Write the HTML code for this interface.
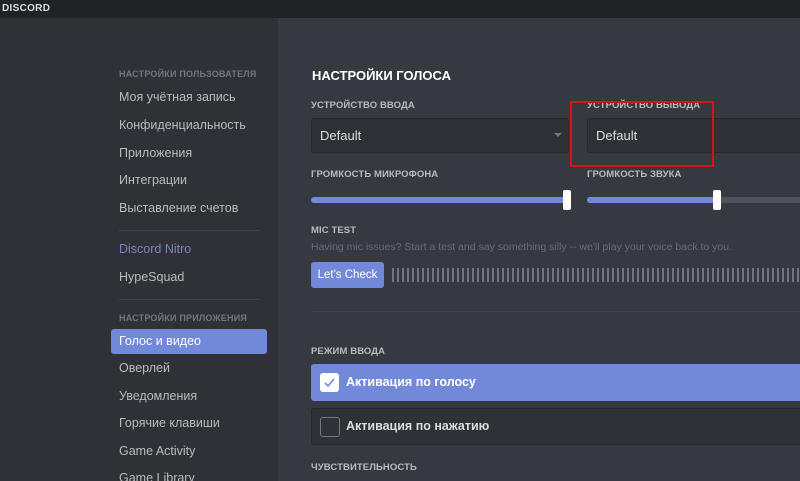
<!DOCTYPE html>
<html><head><meta charset="utf-8"><style>
*{margin:0;padding:0;box-sizing:border-box}
html,body{width:800px;height:481px;overflow:hidden}
body{background:#36393f;font-family:"Liberation Sans","Noto Sans CJK SC",sans-serif;position:relative}
.a{position:absolute;white-space:nowrap}
.tb{left:0;top:0;width:800px;height:18px;background:#202225}
.sb{left:0;top:18px;width:278px;height:463px;background:#2f3136}
.h{font-size:9px;font-weight:bold;color:#72767d;letter-spacing:.2px}
.it{font-size:12.5px;color:#b9bbbe;left:119px}
.l{font-size:9.5px;font-weight:bold;color:#b9bbbe;letter-spacing:.1px}
.sep{height:1px;background:#40434a}
</style></head><body>
<div class="a tb"></div>
<div class="a" style="left:2px;top:3px;font-size:10px;font-weight:bold;color:#dcddde;letter-spacing:.3px">DISCORD</div>
<div class="a sb"></div>
<div class="a h" style="left:119px;top:69px">НАСТРОЙКИ ПОЛЬЗОВАТЕЛЯ</div>
<div class="a it" style="top:90px">Моя учётная запись</div>
<div class="a it" style="top:118px">Конфиденциальность</div>
<div class="a it" style="top:146px">Приложения</div>
<div class="a it" style="top:173px">Интеграции</div>
<div class="a it" style="top:201px">Выставление счетов</div>
<div class="a sep" style="left:119px;top:230px;width:141px"></div>
<div class="a it" style="top:242px;color:#7983c9">Discord Nitro</div>
<div class="a it" style="top:270px">HypeSquad</div>
<div class="a sep" style="left:119px;top:299px;width:141px"></div>
<div class="a h" style="left:119px;top:313px">НАСТРОЙКИ ПРИЛОЖЕНИЯ</div>
<div class="a" style="left:111px;top:329px;width:156px;height:25px;background:#7289da;border-radius:3px"></div>
<div class="a it" style="top:334px;color:#fff">Голос и видео</div>
<div class="a it" style="top:361px">Оверлей</div>
<div class="a it" style="top:389px">Уведомления</div>
<div class="a it" style="top:416px">Горячие клавиши</div>
<div class="a it" style="top:444px">Game Activity</div>
<div class="a it" style="top:471px">Game Library</div>

<div class="a" style="left:312px;top:68px;font-size:13px;font-weight:bold;color:#fff">НАСТРОЙКИ ГОЛОСА</div>
<div class="a l" style="left:311px;top:100px">УСТРОЙСТВО ВВОДА</div>
<div class="a l" style="left:587px;top:100px">УСТРОЙСТВО ВЫВОДА</div>
<div class="a" style="left:311px;top:118px;width:258px;height:35px;background:#2f3136;border:1px solid #26282c;border-radius:3px"></div>
<div class="a" style="left:320px;top:128px;font-size:13px;color:#dcddde">Default</div>
<div class="a" style="left:554px;top:133px;width:0;height:0;border-left:4px solid transparent;border-right:4px solid transparent;border-top:4px solid #72767d"></div>
<div class="a" style="left:587px;top:118px;width:220px;height:35px;background:#2f3136;border:1px solid #26282c;border-radius:3px"></div>
<div class="a" style="left:596px;top:128px;font-size:13px;color:#dcddde">Default</div>
<div class="a" style="left:570px;top:101px;width:144px;height:66px;border:2px solid #d8121b"></div>
<div class="a l" style="left:311px;top:169px">ГРОМКОСТЬ МИКРОФОНА</div>
<div class="a l" style="left:587px;top:169px">ГРОМКОСТЬ ЗВУКА</div>
<div class="a" style="left:311px;top:197px;width:256px;height:6px;background:#7289da;border-radius:3px"></div>
<div class="a" style="left:563px;top:190px;width:8px;height:20px;background:#fff;border-radius:2px"></div>
<div class="a" style="left:587px;top:197px;width:220px;height:6px;background:#4f545c;border-radius:3px"></div>
<div class="a" style="left:587px;top:197px;width:130px;height:6px;background:#7289da;border-radius:3px"></div>
<div class="a" style="left:713px;top:190px;width:8px;height:20px;background:#fff;border-radius:2px"></div>
<div class="a l" style="left:311px;top:225px">MIC TEST</div>
<div class="a" style="left:311px;top:241px;font-size:10.5px;color:#686c73">Having mic issues? Start a test and say something silly -- we'll play your voice back to you.</div>
<div class="a" style="left:311px;top:262px;width:73px;height:26px;background:#7289da;border-radius:3px;color:#fff;font-size:11.5px;text-align:center;line-height:26px">Let's Check</div>
<div class="a" style="left:392px;top:268px;width:410px;height:14px;background:repeating-linear-gradient(90deg,#72767d 0 2px,transparent 2px 5px)"></div>
<div class="a sep" style="left:311px;top:311px;width:489px"></div>
<div class="a l" style="left:311px;top:346px">РЕЖИМ ВВОДА</div>
<div class="a" style="left:311px;top:364px;width:495px;height:37px;background:#7289da;border-radius:3px"></div>
<div class="a" style="left:320px;top:373px;width:19px;height:19px;background:#fff;border-radius:3px"></div>
<svg class="a" style="left:320px;top:373px" width="19" height="19"><path d="M5 10l3 3 6-7" stroke="#7289da" stroke-width="1.6" fill="none"/></svg>
<div class="a" style="left:346px;top:375px;font-size:12.5px;color:#fff;font-weight:bold">Активация по голосу</div>
<div class="a" style="left:311px;top:408px;width:495px;height:37px;background:#2f3136;border:1px solid #26282c;border-radius:3px"></div>
<div class="a" style="left:320px;top:417px;width:20px;height:20px;border:1px solid #72767d;border-radius:3px"></div>
<div class="a" style="left:346px;top:419px;font-size:12.5px;color:#dcddde;font-weight:bold">Активация по нажатию</div>
<div class="a l" style="left:311px;top:462px">ЧУВСТВИТЕЛЬНОСТЬ</div>
</body></html>
